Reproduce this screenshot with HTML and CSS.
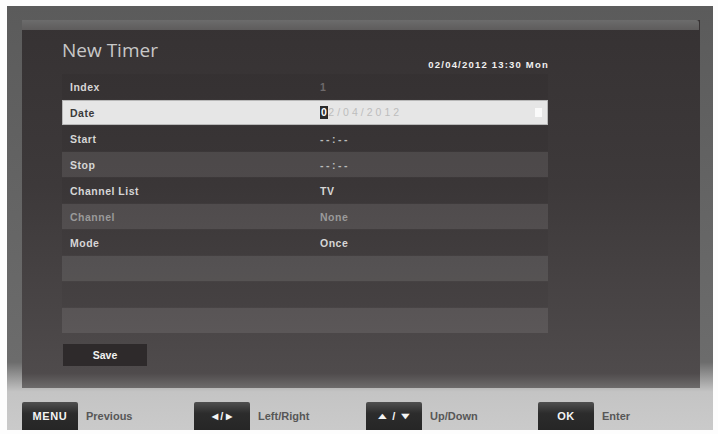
FILE: index.html
```html
<!DOCTYPE html>
<html lang="en">
<head>
    <meta charset="UTF-8" />
    <title>New Timer</title>
    <link rel="stylesheet" href="styles.css">
</head>
<body>
<div class="frame">
    <div class="screen">
        <div class="top-band"></div>

        <div class="header">
            <div class="title">New Timer</div>
            <div class="clock">02/04/2012 13:30 Mon</div>
        </div>

        <div class="rows">
            <div class="row plain"><span class="label">Index</span><span class="value faint">1</span></div>
            <div class="row selected">
                <span class="label">Date</span>
                <span class="value"><span class="cursor">0</span><span class="faded">2/04/2012</span></span>
                <span class="marker"></span>
            </div>
            <div class="row plain"><span class="label">Start</span><span class="value dots">--:--</span></div>
            <div class="row light"><span class="label">Stop</span><span class="value dots">--:--</span></div>
            <div class="row plain"><span class="label">Channel List</span><span class="value">TV</span></div>
            <div class="row light"><span class="label dim">Channel</span><span class="value dim">None</span></div>
            <div class="row plain"><span class="label">Mode</span><span class="value">Once</span></div>
            <div class="row light"></div>
            <div class="row plain"></div>
            <div class="row light"></div>
        </div>

        <div class="save">Save</div>
    </div>

    <div class="footer">
        <div class="hint"><span class="key">MENU</span><span class="hint-text">Previous</span></div>
        <div class="hint"><span class="key arrows"><small>&#9664;</small>/<small>&#9654;</small></span><span class="hint-text">Left/Right</span></div>
        <div class="hint"><span class="key arrows wide"><small>&#9650;</small>/<small>&#9660;</small></span><span class="hint-text">Up/Down</span></div>
        <div class="hint"><span class="key">OK</span><span class="hint-text">Enter</span></div>
    </div>
</div>
</body>
</html>
```

FILE: styles.css
```css
html, body {
    margin: 0;
    padding: 0;
}

body {
    background: #fdfdfd;
    font-family: "Liberation Sans", Arial, sans-serif;
    width: 718px;
    height: 434px;
    overflow: hidden;
}

.frame {
    margin: 6px 5px 0 7px;
    height: 424px;
    background: linear-gradient(#5b5b5b 0%, #6c6c6c 84%, #c4c4c4 91%, #cacaca 100%);
    display: flex;
    flex-direction: column;
}

.screen {
    margin: 14px 13px 0 15px;
    height: 368px;
    background: linear-gradient(#363233 0%, #3d393a 45%, #4b4748 85%, #4f4b4c 96%, #6d6b6b 100%);
    display: flex;
    flex-direction: column;
}

.top-band {
    height: 10px;
    margin-right: 1px;
    background: linear-gradient(#6c6c6c, #5e5c5c);
    border-radius: 0 3px 0 0;
}

.header {
    display: flex;
    justify-content: space-between;
    align-items: flex-end;
    padding: 0 151px 3px 40px;
    height: 44px;
    box-sizing: border-box;
}

.title {
    font-family: "Open Sans", sans-serif;
    font-size: 19px;
    color: #c8c8c8;
    line-height: 20px;
    margin-bottom: 11px;
}

.clock {
    font-size: 9.5px;
    font-weight: bold;
    color: #f0f0f0;
    letter-spacing: 1.2px;
    line-height: 12px;
}

.rows {
    margin: 0 152px 0 40px;
    display: flex;
    flex-direction: column;
}

.row {
    height: 25px;
    margin-bottom: 1px;
    display: flex;
    align-items: center;
    font-size: 10.5px;
    font-weight: bold;
    letter-spacing: 0.5px;
    color: #d6d6d6;
    position: relative;
}

.row.plain {
    background: rgba(0, 0, 0, 0.04);
}

.row.light {
    background: rgba(255, 255, 255, 0.09);
}

.row.selected {
    background: #e6e6e6;
    color: #3a3a3a;
    box-shadow: inset 0 0 0 1px #b8b8b8;
}

.label {
    width: 250px;
    padding-left: 8px;
}

.value.dim,
.label.dim {
    color: #9a9a9a;
}

.value.faint {
    color: #6e6a6b;
}

.cursor {
    display: inline-block;
    background: #2a2a2a;
    color: #fff;
    padding: 0 1px;
    line-height: 13px;
}

.faded {
    color: #bdbdbd;
    letter-spacing: 3px;
    font-weight: normal;
}

.dots {
    letter-spacing: 2.5px;
    color: #bcbcbc;
}

.marker {
    position: absolute;
    right: 6px;
    top: 8px;
    width: 7px;
    height: 9px;
    background: #fafafa;
}

.save {
    margin: 10px 0 0 41px;
    width: 84px;
    height: 22px;
    background: #2e2a2b;
    color: #f2f2f2;
    font-size: 10.5px;
    font-weight: bold;
    display: flex;
    align-items: center;
    justify-content: center;
}

.footer {
    flex: 1;
    display: flex;
    align-items: flex-end;
    padding-left: 15px;
}

.hint {
    width: 172px;
    display: flex;
    align-items: center;
}

.key {
    width: 56px;
    height: 28px;
    box-sizing: border-box;
    background: linear-gradient(#505050, #2c2c2c 40%, #262626);
    border-radius: 2px 2px 0 0;
    color: #f4f4f4;
    font-size: 11px;
    font-weight: bold;
    letter-spacing: 0.6px;
    display: flex;
    align-items: center;
    justify-content: center;
}

.key.arrows small {
    font-size: 8px;
    margin: 0 2px;
}

.key.wide small {
    display: inline-block;
    font-size: 9px;
    transform: scaleX(1.6);
    margin: 0 5px;
}

.hint-text {
    margin-left: 8px;
    font-size: 11px;
    font-weight: bold;
    color: #575757;
}
```
